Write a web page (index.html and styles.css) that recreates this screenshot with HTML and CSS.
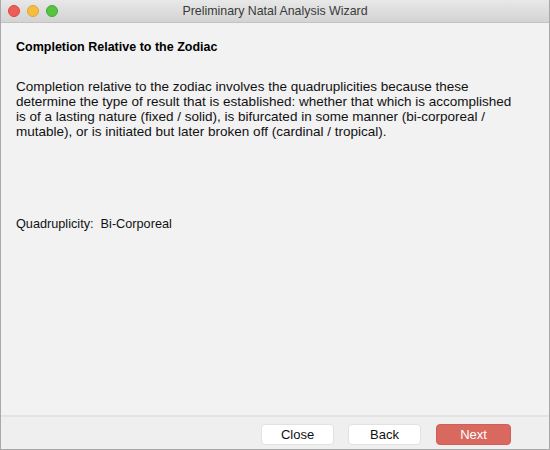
FILE: index.html
```html
<!DOCTYPE html>
<html lang="en">
<head>
  <meta charset="UTF-8" />
  <title>Preliminary Natal Analysis Wizard</title>
  <link rel="stylesheet" href="styles.css">
</head>
<body>
  <div class="ventana">
    <div class="barra-titulo">
      <div class="semaforo">
        <span class="luz rojo"></span>
        <span class="luz amarillo"></span>
        <span class="luz verde"></span>
      </div>
      <div class="titulo">Preliminary Natal Analysis Wizard</div>
    </div>

    <div class="contenido">
      <h1>Completion Relative to the Zodiac</h1>
      <p class="texto">Completion relative to the zodiac involves the quadruplicities because these determine the type of result that is established: whether that which is accomplished is of a lasting nature (fixed / solid), is bifurcated in some manner (bi-corporeal / mutable), or is initiated but later broken off (cardinal / tropical).</p>
      <p class="dato">Quadruplicity:&nbsp; Bi-Corporeal</p>
    </div>

    <div class="pie">
      <button class="boton">Close</button>
      <button class="boton">Back</button>
      <button class="boton principal">Next</button>
    </div>
  </div>
</body>
</html>
```

FILE: styles.css
```css
body {
  margin: 0;
  width: 550px;
  height: 450px;
  overflow: hidden;
  font-family: "Liberation Sans", Arial, sans-serif;
  color: #111;
}

.ventana {
  width: 550px;
  height: 450px;
  box-sizing: border-box;
  border: 1px solid #a9a9a9;
  border-top: none;
  background-color: #f2f2f2;
  display: flex;
  flex-direction: column;
}

.barra-titulo {
  height: 22px;
  flex-shrink: 0;
  background: linear-gradient(#e8e8e8, #d3d3d3);
  border-bottom: 1px solid #c2c2c2;
  display: flex;
  align-items: center;
  position: relative;
}

.semaforo {
  display: flex;
  gap: 7px;
  padding-left: 7px;
}

.luz {
  width: 12px;
  height: 12px;
  border-radius: 50%;
  box-sizing: border-box;
}

.rojo { background-color: #ec5f57; border: 1px solid #d9463f; }
.amarillo { background-color: #f5be3e; border: 1px solid #dea23a; }
.verde { background-color: #57c33f; border: 1px solid #44a836; }

.titulo {
  position: absolute;
  left: 0;
  right: 0;
  text-align: center;
  font-size: 12.4px;
  color: #3a3a3a;
}

.contenido {
  flex: 1;
  padding: 17px 15px 0 15px;
}

h1 {
  margin: 0;
  font-size: 12.5px;
  font-weight: bold;
  color: #000;
}

.texto {
  margin: 25px 0 0 0;
  max-width: 505px;
  font-size: 13.5px;
  line-height: 15px;
  color: #111;
}

.dato {
  margin: 78px 0 0 0;
  font-size: 12.7px;
  color: #111;
}

.pie {
  height: 30px;
  flex-shrink: 0;
  border-top: 2px solid #e3e3e3;
  background-color: #efefef;
  display: flex;
  justify-content: flex-end;
  align-items: center;
  gap: 14px;
  padding: 2px 38px 0 0;
}

.boton {
  width: 73px;
  height: 21px;
  padding: 0;
  font-family: "Liberation Sans", Arial, sans-serif;
  font-size: 13px;
  color: #111;
  background-color: #fff;
  border: 1px solid #e2e2e2;
  border-radius: 4px;
}

.principal {
  width: 75px;
  margin-left: 1px;
  background-color: #d9695f;
  border-color: #d06055;
  color: #fff;
}
```
